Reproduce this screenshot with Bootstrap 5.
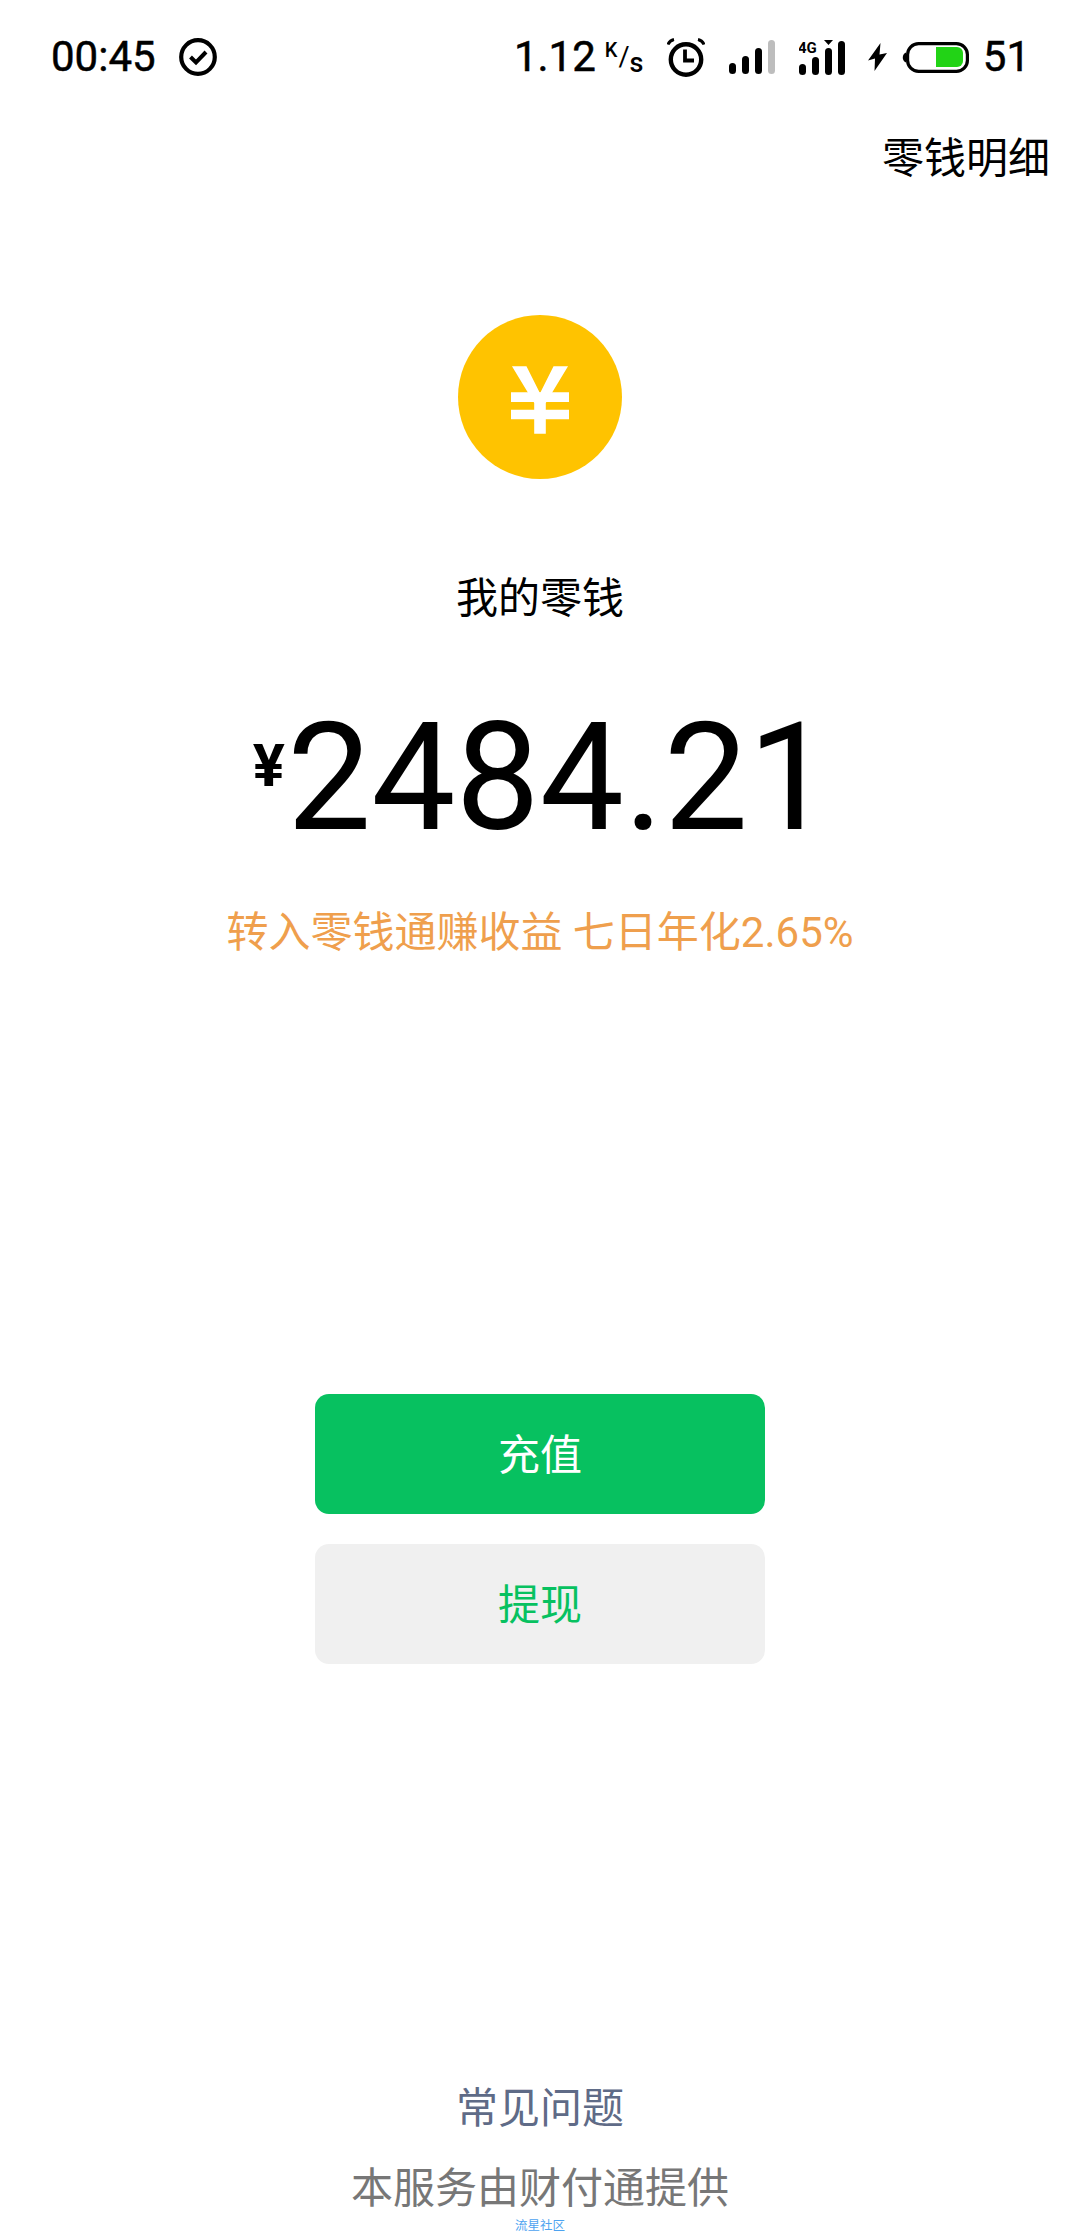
<!DOCTYPE html>
<html lang="zh-CN">
<head>
  <meta charset="UTF-8">
  <title>我的零钱</title>
  <link href="https://cdn.jsdelivr.net/npm/bootstrap@5.3.3/dist/css/bootstrap.min.css" rel="stylesheet">
  <style>
    html, body {
      height: 2232px;
      overflow: hidden;
    }
    body {
      background-color: #fff;
      color: #000;
      font-family: Roboto, "Noto Sans CJK SC", sans-serif;
      font-size: 42px;
      line-height: 60px;
    }
    .status-bar {
      height: 114px;
      padding: 0 50px 0 51px;
      font-size: 42px;
      line-height: 1;
      -webkit-text-stroke: 0.5px #000;
    }
    .status-bar svg {
      display: block;
      flex-shrink: 0;
    }
    .check-icon {
      margin-left: 23px;
    }
    .speed-unit {
      width: 38px;
      height: 34px;
      margin-left: 9px;
      font-size: 27px;
      font-weight: 500;
      line-height: 1;
      -webkit-text-stroke: 0;
    }
    .speed-k {
      font-size: 20px;
    }
    .speed-slash {
      margin-left: 1px;
      font-weight: 400;
    }
    .speed-s {
      margin-bottom: -3px;
    }
    .alarm-icon {
      margin-left: 24px;
    }
    .signal-icon {
      margin-left: 24px;
    }
    .bolt-icon {
      margin-left: 23px;
    }
    .battery-icon {
      margin-left: 14px;
    }
    .battery-level {
      margin-left: 14px;
    }
    .detail-bar {
      height: 86px;
      padding: 3px 30px 0 0;
    }
    .coin {
      width: 164px;
      height: 164px;
      margin-top: 115px;
      padding-top: 5px;
      background-color: #ffc300;
    }
    .wallet-label {
      margin-top: 90px;
    }
    .amount-row {
      margin-top: 64px;
      height: 170px;
      line-height: 170px;
      font-size: 150px;
    }
    .amount-sign {
      font-size: 60px;
      font-weight: 700;
      line-height: 1;
      position: relative;
      top: -12px;
      margin: 0 2px 0 5px;
    }
    .interest-text {
      margin-top: 40px;
      color: #ef9f4d;
    }
    .wallet-actions {
      margin-top: 431px;
      width: 450px;
      gap: 30px;
    }
    .wallet-btn {
      height: 120px;
      padding-top: 9px;
      font-size: 42px;
      line-height: 1;
      border: 0;
      border-radius: 14px;
    }
    .wallet-btn-green,
    .wallet-btn-green:hover {
      background-color: #07c160;
      color: #fff;
    }
    .wallet-btn-gray,
    .wallet-btn-gray:hover {
      background-color: #f0f0f0;
      color: #07c160;
    }
    .faq-link {
      margin-top: 415px;
      color: #5f6b87;
      text-decoration: none;
    }
    .provider-text {
      margin-top: 20px;
      color: #777;
    }
    .watermark-text {
      margin-top: -1px;
      font-size: 12.5px;
      line-height: 16px;
      color: #4da3f0;
    }
  </style>
</head>
<body>
  <div class="status-bar d-flex justify-content-between align-items-center">
    <div class="d-flex align-items-center">
      <span>00:45</span>
      <svg class="check-icon" width="38" height="38" viewBox="0 0 38 38" fill="none" stroke="#000">
        <circle cx="19" cy="19" r="16.8" stroke-width="4.2"/>
        <path d="M11.5 19l5.5 5.5 10-10.5" stroke-width="4"/>
      </svg>
    </div>
    <div class="d-flex align-items-center">
      <span>1.12</span>
      <span class="speed-unit d-flex">
        <span class="speed-k align-self-start">K</span>
        <span class="speed-slash align-self-center">/</span>
        <span class="speed-s align-self-end">s</span>
      </span>
      <svg class="alarm-icon" width="38" height="39" viewBox="0 0 38 39" fill="none" stroke="#000">
        <circle cx="19" cy="21.5" r="15.2" stroke-width="4.4"/>
        <path d="M18 11.5V22.5H27" stroke-width="3.8"/>
        <path d="M1 6.5Q2.5 2.5 7 1.5M37 6.5Q35.5 2.5 31 1.5" stroke-width="3"/>
      </svg>
      <svg class="signal-icon" width="46" height="34" viewBox="0 0 46 34">
        <rect x="0" y="23" width="7" height="11" rx="3.5"/>
        <rect x="13" y="16" width="7" height="18" rx="3.5"/>
        <rect x="26" y="8" width="7" height="26" rx="3.5"/>
        <rect x="39" y="0" width="7" height="34" rx="3.5" fill="#bdbdbd"/>
      </svg>
      <svg class="signal-icon" width="46" height="35" viewBox="0 0 46 35">
        <text x="-1" y="13" font-family="Roboto" font-size="15" font-weight="700" stroke="none">4G</text>
        <rect x="0" y="24" width="7" height="11" rx="3.5"/>
        <rect x="13" y="17" width="7" height="18" rx="3.5"/>
        <rect x="26" y="8" width="7" height="27" rx="3.5"/>
        <rect x="39" y="1" width="7" height="34" rx="3.5"/>
        <path d="M25 0h9l-4.500 5z"/>
      </svg>
      <svg class="bolt-icon" width="19" height="28" viewBox="0 0 19 28">
        <path d="M12.500 0L0 17.500 7 15.500 6.500 28 19 10 11.500 11.500z"/>
      </svg>
      <svg class="battery-icon" width="68" height="31" viewBox="0 0 68 31" fill="none">
        <path d="M5 10.500a5.500 5.500 0 0 0 0 10z" fill="#000"/>
        <rect x="6.600" y="1.600" width="59.800" height="27.800" rx="11" stroke="#000" stroke-width="3.200"/>
        <path d="M35 5h21a6 6 0 0 1 6 6v8a6 6 0 0 1-6 6H35z" fill="#22d316"/>
      </svg>
      <span class="battery-level">51</span>
    </div>
  </div>

  <div class="detail-bar d-flex justify-content-end align-items-center">零钱明细</div>

  <main class="d-flex flex-column align-items-center">
    <div class="coin rounded-circle d-flex justify-content-center align-items-center">
      <svg width="58" height="70" viewBox="0 0 60 70" fill="#fff">
        <path d="M1 0h15l14 28L44 0h15L36 38v32H24V38z"/>
        <path d="M0 27h60v10H0zM0 45h60v10H0z"/>
      </svg>
    </div>
    <div class="wallet-label">我的零钱</div>
    <div class="amount-row d-flex align-items-center"><span class="amount-sign">¥</span><span>2484.21</span></div>
    <div class="interest-text">转入零钱通赚收益 七日年化2.65%</div>
    <div class="wallet-actions d-flex flex-column">
      <button type="button" class="btn wallet-btn wallet-btn-green">充值</button>
      <button type="button" class="btn wallet-btn wallet-btn-gray">提现</button>
    </div>
    <a href="#" class="faq-link">常见问题</a>
    <div class="provider-text">本服务由财付通提供</div>
    <div class="watermark-text">流星社区</div>
  </main>

  <script src="https://cdn.jsdelivr.net/npm/bootstrap@5.3.3/dist/js/bootstrap.bundle.min.js"></script>
</body>
</html>
